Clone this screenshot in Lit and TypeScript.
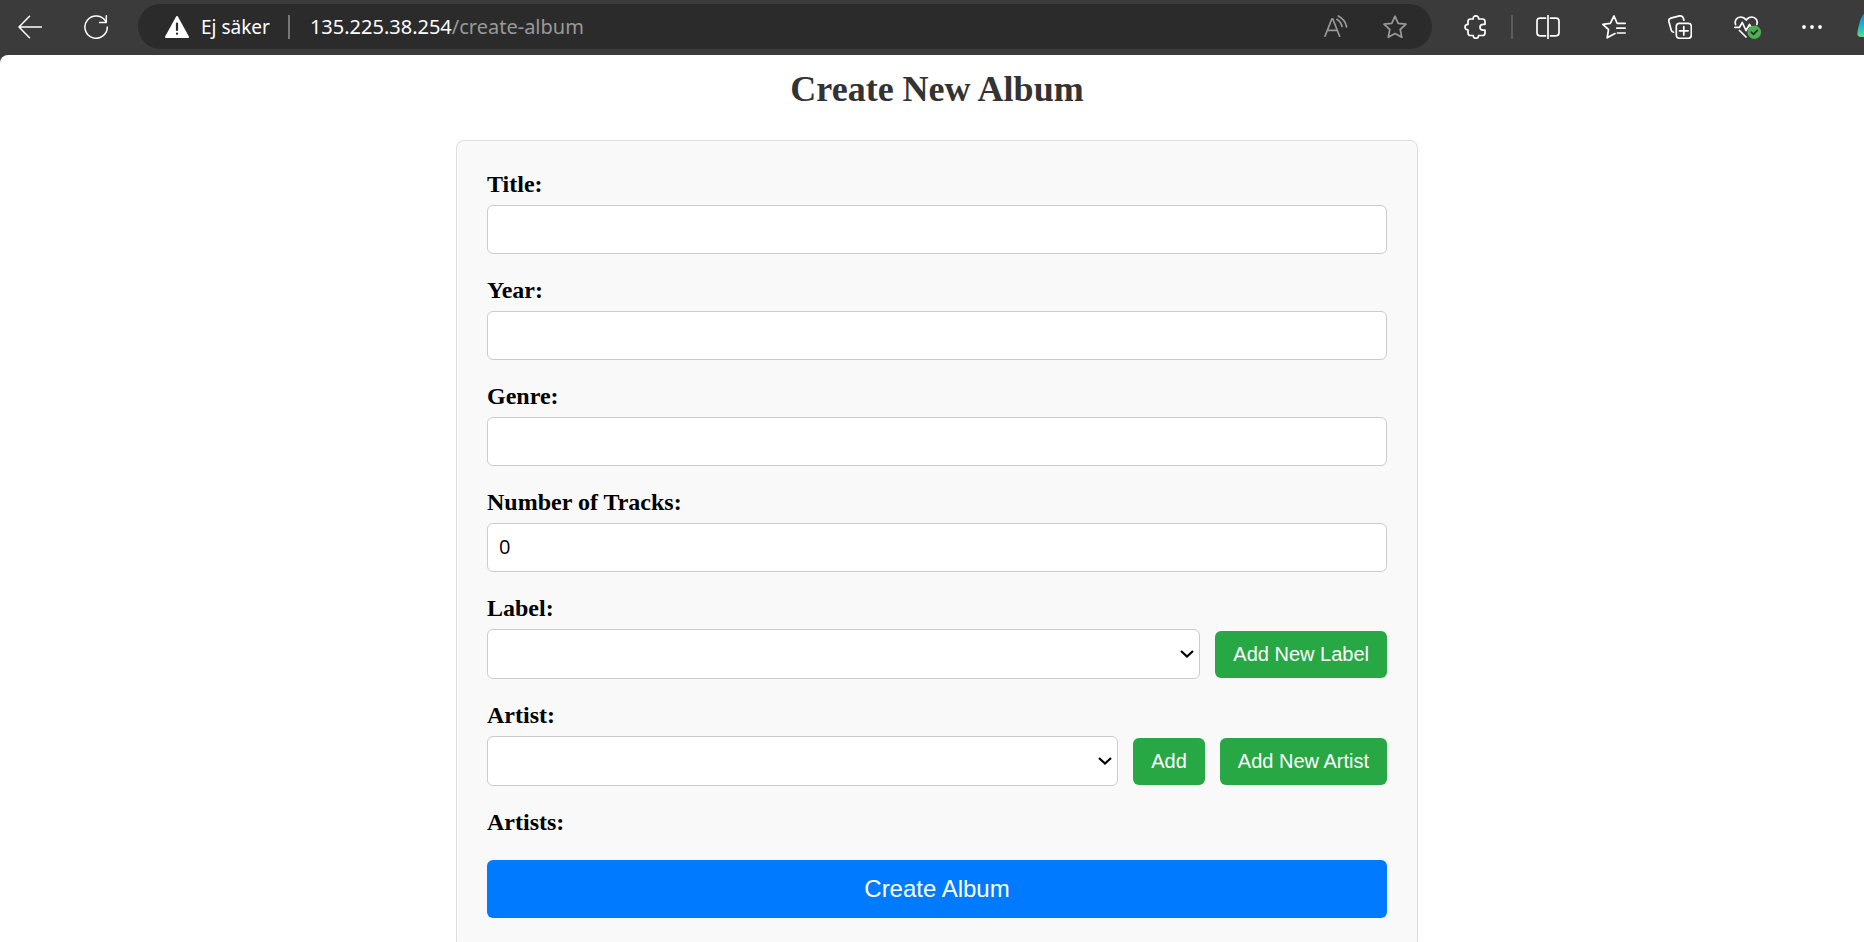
import { LitElement, html, css, svg } from "lit";
import { customElement, property, state } from "lit/decorators.js";

const icons = {
  back: svg`<path d="M23.500 12H1.200M11.500 1.200 1 12l10.500 10.800" />`,
  reload: svg`<path d="M21.800 6.500A11.200 11.200 0 1 0 23.300 12M22.300 .8v6.700h-6.800" />`,
  readAloud: svg`<path d="M1 21.200 7.900 3.800h.8l6.900 17.400M3.600 15.300h9.400M12.800 4.300c2.700 1.500 4.500 3.900 5.200 7.200M14.300 1c4.400 2.200 7.400 6 8.300 11" />`,
  star: svg`<path d="M12 1.200 15.200 8.300 23 9.200 17.200 14.500 18.800 22.300 12 18.500 5.200 22.300 6.800 14.500 1 9.200 8.800 8.300Z" />`,
  puzzle: svg`<path d="M4 6.500Q4 4 6.500 4H9.200C9 2 10 .9 11.900 .9S14.800 2 14.600 4H18.500Q21 4 21 6.500V9.300H19.200C17 9.300 16 10.400 16 12.200S17 15.100 19.200 15.100H21V18Q21 20.500 18.500 20.500H14.600C14.600 22.400 13.600 23.300 11.900 23.300S9.200 22.400 9.200 20.500H6.500Q4 20.500 4 18V14.800C2 14.800 1 13.800 1 12.100S2 9.400 4 9.400Z" />`,
  split: svg`<path d="M9.500 3.200H4Q1 3.200 1 6.200V17.800Q1 20.800 4 20.800H9.500M14.500 3.200H20Q23 3.200 23 6.200V17.800Q23 20.800 20 20.800H14.500M12 .5V23.500" />`,
  favorites: svg`<path d="M15.200 8.300 12 1 8.300 8.300 .8 9.300 6.500 14.500 5.200 22.800 13 18.600M15.200 8.300H23.200M14.800 13.200H23.200M15.500 18H23.200" />`,
  collections: svg`<rect x="8.300" y="8.300" width="15" height="15" rx="3" /><path d="M15.800 11.500v8.600M11.500 15.800h8.600M5.500 17.200C4 16.800 3.500 16 3.200 15L.9 6.500C.5 4.800 1.200 3.600 2.800 3.100L11.500 .9C13.500 .5 14.800 1.300 15.500 3.500L15.900 5.200" />`,
  more: svg`<g fill="currentColor" stroke="none"><circle cx="4" cy="12" r="1.900" /><circle cx="12" cy="12" r="1.900" /><circle cx="20" cy="12" r="1.900" /></g>`,
};

@customElement("browser-bar")
export class BrowserBar extends LitElement {
  @property() host = "135.225.38.254";
  @property() path = "/create-album";

  static styles = css`
    :host {
      display: flex;
      align-items: center;
      flex: none;
      height: 55px;
      box-sizing: border-box;
      padding: 4px 0 6px 18px;
      overflow: hidden;
      background: #3b3b3b;
      color: #fff;
      font-family: "Noto Sans", "Open Sans", sans-serif;
      font-size: 19px;
    }
    button {
      display: block;
      flex: none;
      padding: 0;
      border: 0;
      background: none;
      color: inherit;
    }
    svg {
      display: block;
      fill: none;
      stroke: currentColor;
      stroke-width: 1.5;
      stroke-linejoin: round;
      stroke-linecap: round;
    }
    .nav {
      display: flex;
      gap: 42px;
      margin-right: 30px;
    }
    .address {
      display: flex;
      align-items: center;
      flex: 1;
      min-width: 0;
      height: 45px;
      box-sizing: border-box;
      padding: 0 25px 0 27px;
      border-radius: 23px;
      background: #2b2b2b;
    }
    .security {
      display: flex;
      align-items: center;
      gap: 12px;
      font: inherit;
    }
    .divider {
      flex: none;
      width: 2px;
      height: 24px;
      margin: 0 20px 0 18px;
      background: #777;
    }
    .url {
      flex: 1;
      min-width: 0;
      font-size: 20px;
      white-space: nowrap;
      overflow: hidden;
    }
    .path,
    .actions {
      color: #999;
    }
    .actions {
      display: flex;
      gap: 35px;
    }
    .actions svg,
    .tools svg {
      stroke-width: 1.7;
    }
    .tools {
      display: flex;
      align-items: center;
      gap: 42px;
      margin: 0 -17px 0 32px;
    }
    .group {
      display: flex;
      align-items: center;
    }
    .group .divider {
      margin: 0 23px;
      background: #5c5c5c;
    }
    .health {
      margin-right: -4px;
    }
    .copilot {
      margin-left: -9px;
    }
  `;

  private icon(name: keyof typeof icons) {
    return html`<svg width="24" height="24" viewBox="0 0 24 24" aria-hidden="true">${icons[name]}</svg>`;
  }

  render() {
    return html`
      <nav class="nav">
        <button aria-label="Back">${this.icon("back")}</button>
        <button aria-label="Reload">${this.icon("reload")}</button>
      </nav>
      <div class="address">
        <button class="security">
          <svg width="24" height="24" viewBox="0 0 24 24" aria-hidden="true">
            <path d="M12 2 23 22H1Z" fill="#fff" stroke-width="2" />
            <path d="M12 8.500v6.500M12 18.500v.3" stroke="#2b2b2b" stroke-width="2.200" />
          </svg>
          Ej säker
        </button>
        <span class="divider"></span>
        <span class="url">${this.host}<span class="path">${this.path}</span></span>
        <div class="actions">
          <button aria-label="Read aloud">${this.icon("readAloud")}</button>
          <button aria-label="Add to favorites">${this.icon("star")}</button>
        </div>
      </div>
      <div class="tools">
        <div class="group">
          <button aria-label="Extensions">${this.icon("puzzle")}</button>
          <span class="divider"></span>
          <button aria-label="Split screen">${this.icon("split")}</button>
        </div>
        <button aria-label="Favorites">${this.icon("favorites")}</button>
        <button aria-label="Collections">${this.icon("collections")}</button>
        <button class="health" aria-label="Browser essentials">
          <svg width="28" height="24" viewBox="0 0 28 24" aria-hidden="true">
            <path d="M1.600 9.500C.2 5.500 3 2 6.500 2 9 2 10.600 3 12.200 5 13.800 3 15.500 2 17.800 2 21.500 2 24.200 5.500 22.800 9.500M.8 12.300H5.500L8.300 7.500 12 15.500 15.500 9.500 17 12.300H18.500M5.500 15.500 12 22" />
            <circle cx="20.300" cy="17.200" r="6.800" fill="#4caf50" stroke="none" />
            <path d="m17.300 17.200 2.200 2.200 3.800-4" stroke="#2b2b2b" />
          </svg>
        </button>
        <button aria-label="More">${this.icon("more")}</button>
        <button class="copilot" aria-label="Copilot">
          <svg width="24" height="28" viewBox="0 0 24 28" aria-hidden="true">
            <defs>
              <linearGradient id="copilot" x1="0" y1="0" x2="0" y2="1">
                <stop offset="0" stop-color="#1a86dd" />
                <stop offset=".5" stop-color="#17b3d0" />
                <stop offset="1" stop-color="#5fdc86" />
              </linearGradient>
            </defs>
            <path d="M8 0H24V24H4C1 24 0 22.500 .5 19.500 1.500 12 4 2 8 0Z" fill="url(#copilot)" stroke="none" />
          </svg>
        </button>
      </div>
    `;
  }
}

@customElement("app-root")
export class AppRoot extends LitElement {
  @state() private labels: string[] = [];
  @state() private artists: string[] = [];

  static styles = css`
    :host {
      display: flex;
      flex-direction: column;
      height: 100vh;
      background: #3b3b3b;
      font-family: "Liberation Serif", "Times New Roman", serif;
    }
    .page {
      flex: 1;
      min-height: 0;
      overflow-y: auto;
      scrollbar-width: none;
      padding: 14px 0 0 10px;
      border-top-left-radius: 8px;
      background: #fff;
    }
    h1 {
      margin: 0 0 30px;
      color: #333;
      font-size: 36px;
      line-height: 41px;
      text-align: center;
    }
    form {
      display: flex;
      flex-direction: column;
      gap: 23px;
      max-width: 900px;
      margin: 0 auto;
      padding: 30px;
      border: 1px solid #ddd;
      border-radius: 8px;
      background: #f9f9f9;
    }
    .field {
      display: flex;
      flex-direction: column;
      gap: 8px;
    }
    label,
    .caption {
      font-size: 24px;
      font-weight: bold;
      line-height: 26px;
      color: #000;
    }
    .caption {
      padding-bottom: 2px;
    }
    input,
    select {
      width: 100%;
      height: 49px;
      box-sizing: border-box;
      padding: 0 11px 2px;
      border: 1px solid #ccc;
      border-radius: 6px;
      background: #fff;
      color: #000;
      font-family: "Open Sans", sans-serif;
      font-size: 20px;
    }
    input {
      appearance: textfield;
    }
    select {
      grid-area: 1 / 1;
      height: 50px;
      appearance: none;
    }
    .row {
      display: flex;
      align-items: center;
      gap: 15px;
    }
    .picker {
      display: grid;
      align-items: center;
      flex: 1;
      min-width: 0;
    }
    .chevron {
      grid-area: 1 / 1;
      justify-self: end;
      margin-right: 6px;
      fill: none;
      stroke: #000;
      stroke-width: 2.2;
      pointer-events: none;
    }
    button {
      padding: 12px 18px;
      border: 0;
      border-radius: 6px;
      background: #28a745;
      color: #fff;
      font-family: "Liberation Sans", Arial, sans-serif;
      font-size: 20px;
      line-height: 23px;
    }
    .submit {
      padding: 15px;
      background: #007bff;
      font-size: 24px;
      line-height: 28px;
    }
  `;

  private textField(id: string, caption: string, type = "text", value = "") {
    return html`
      <div class="field">
        <label for=${id}>${caption}</label>
        <input id=${id} type=${type} .value=${value} />
      </div>
    `;
  }

  private pickField(id: string, caption: string, options: string[], actions: string[]) {
    return html`
      <div class="field">
        <label for=${id}>${caption}</label>
        <div class="row">
          <div class="picker">
            <select id=${id}>
              <option value=""></option>
              ${options.map((name) => html`<option>${name}</option>`)}
            </select>
            <svg class="chevron" width="14" height="8" viewBox="0 0 14 8" aria-hidden="true">
              <path d="m1 1 6 5.500L13 1" />
            </svg>
          </div>
          ${actions.map((name) => html`<button type="button">${name}</button>`)}
        </div>
      </div>
    `;
  }

  render() {
    return html`
      <browser-bar></browser-bar>
      <main class="page">
        <h1>Create New Album</h1>
        <form @submit=${(e: Event) => e.preventDefault()}>
          ${this.textField("title", "Title:")}
          ${this.textField("year", "Year:")}
          ${this.textField("genre", "Genre:")}
          ${this.textField("tracks", "Number of Tracks:", "number", "0")}
          ${this.pickField("label", "Label:", this.labels, ["Add New Label"])}
          ${this.pickField("artist", "Artist:", this.artists, ["Add", "Add New Artist"])}
          <div class="caption">Artists:</div>
          <button class="submit">Create Album</button>
        </form>
      </main>
    `;
  }
}
